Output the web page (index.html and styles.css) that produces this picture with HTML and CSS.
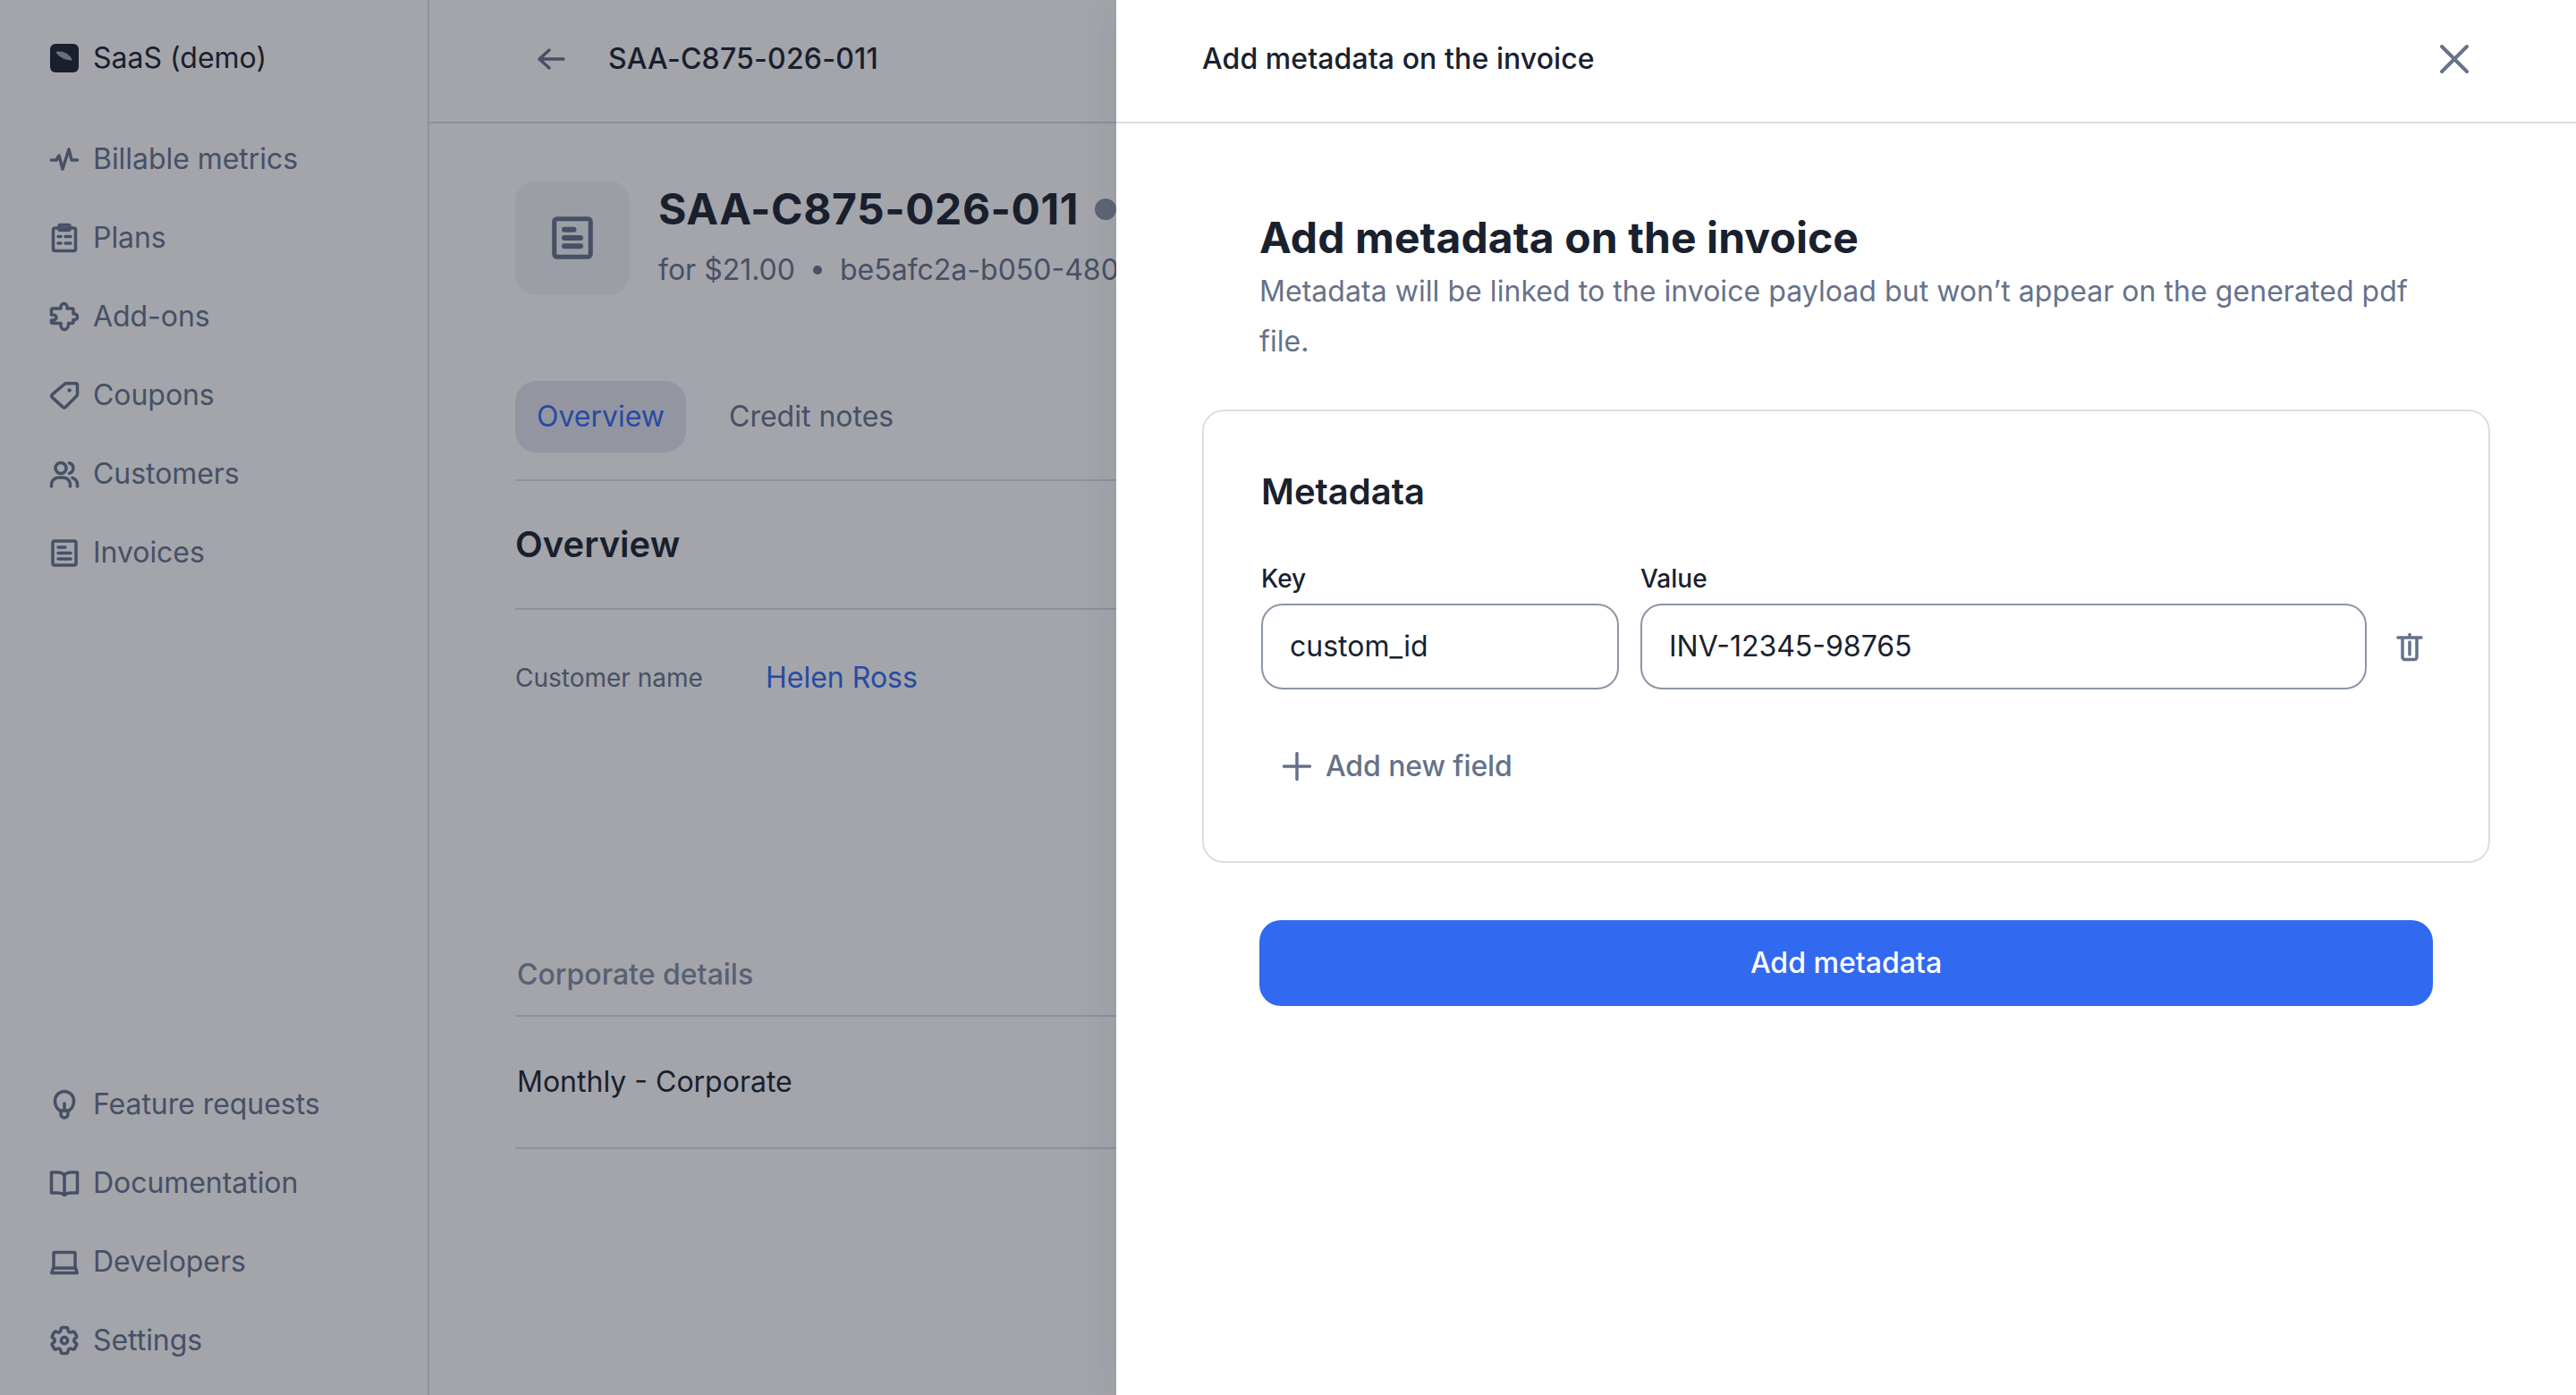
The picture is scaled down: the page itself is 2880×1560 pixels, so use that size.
FILE: index.html
```html
<!DOCTYPE html>
<html lang="en">
<head>
<meta charset="utf-8">
<title>Add metadata on the invoice</title>
<link rel="stylesheet" href="styles.css">
</head>
<body>
<div class="app">
	<!-- Sidebar -->
	<aside class="sidebar">
		<div class="org">
			<svg class="icon" viewBox="0 0 16 16"><rect width="16" height="16" rx="3" fill="#19212e"/><path d="M3.600 4.400c3.200-.6 6.600.6 8.600 4.200.3.6.3.8-.3.7-3.600-.4-6.600-1.700-8.500-4.300-.2-.3-.1-.5.2-.6z" fill="#a4a6ac"/></svg>
			<span>SaaS (demo)</span>
		</div>
		<nav class="nav">
			<a class="nav-item"><svg class="icon" viewBox="0 0 16 16"><path d="M.75 8.500H3.500L5 6l2 7.500L10.500 2.500 12 8.500h3.250"/></svg>Billable metrics</a>
			<a class="nav-item"><svg class="icon" viewBox="0 0 16 16"><rect x="1.750" y="2.500" width="12.500" height="12.750" rx="1"/><rect x="5" y=".75" width="6" height="3" rx=".75"/><path d="M4.500 7.250h1.500M8.500 7.250h3M4.500 11h1.500M8.500 11h3"/></svg>Plans</a>
			<a class="nav-item"><svg class="icon" viewBox="0 0 16 16"><path d="M6 3.500C5.700 1.500 6.800.75 7.700.75S9.800 1.500 9.500 3.500h2.750a.75.75 0 0 1 .75.75v2.250c1.800-.2 2.250.75 2.250 1.750S14.800 10 13 9.750V11a.75.75 0 0 1-.75.75h-2C10.500 13.500 9.500 15.250 8 15.250s-2.200-1.500-2-3.500H1.500a.75.75 0 0 1-.75-.75V10C2.500 10.200 3.500 9.500 3.500 8.500S2.500 6.800.75 7V4.250a.75.75 0 0 1 .75-.75z"/></svg>Add-ons</a>
			<a class="nav-item"><svg class="icon" viewBox="0 0 16 16"><path d="M1.200 7.600L8 1.800a1.500 1.500 0 0 1 1-.4h5.250a1 1 0 0 1 1 1V7.500a1.500 1.500 0 0 1-.5 1L8.500 14.700a1 1 0 0 1-1.300 0L1.200 9.200a1 1 0 0 1 0-1.600z"/><circle class="solid" cx="10.800" cy="5.200" r="1.100"/></svg>Coupons</a>
			<a class="nav-item"><svg class="icon" viewBox="0 0 16 16"><circle cx="6" cy="4.800" r="3"/><path d="M.75 15v-1a4 4 0 0 1 4-4h2.500a4 4 0 0 1 4 4V15M10.700 1.900a3 3 0 0 1 0 5.800M12.500 10.200a4 4 0 0 1 2.750 3.800V15"/></svg>Customers</a>
			<a class="nav-item"><svg class="icon" viewBox="0 0 16 16"><rect x="1.500" y="1.500" width="13" height="13.500" rx="1"/><path d="M4.500 5h4M4.500 8.250h7M4.500 11.500h7"/></svg>Invoices</a>
		</nav>
		<nav class="nav nav-bottom">
			<a class="nav-item"><svg class="icon" viewBox="0 0 16 16"><path d="M5.500 11.500C3.700 10.300 2.750 8.500 2.750 6a5.250 5.250 0 0 1 10.500 0c0 2.500-.95 4.300-2.750 5.500z"/><path d="M6 11.500v2a2 2 0 0 0 4 0v-2M8 7.500v4"/></svg>Feature requests</a>
			<a class="nav-item"><svg class="icon" viewBox="0 0 16 16"><path d="M8 3.500C7 2.500 5.800 2 4.500 2H.75v11.500h4c1.300 0 2.300.4 3.250 1.250.95-.85 1.950-1.250 3.250-1.250h4V2H11.500C10.200 2 9 2.500 8 3.500zM8 3.500v11.250"/></svg>Documentation</a>
			<a class="nav-item"><svg class="icon" viewBox="0 0 16 16"><rect x="2" y="2.750" width="12" height="8.750" rx=".5"/><path d="M1.750 11.500L.9 14.250h14.200L14.250 11.500"/></svg>Developers</a>
			<a class="nav-item"><svg class="icon icon-gear" viewBox="2 2 20 20"><path d="M9.594 3.940c.09-.542.56-.94 1.110-.94h2.593c.55 0 1.020.398 1.110.94l.213 1.281c.063.374.313.686.645.870.074.04.147.083.22.127.325.196.72.257 1.075.124l1.217-.456a1.125 1.125 0 0 1 1.370.49l1.296 2.247a1.125 1.125 0 0 1-.26 1.431l-1.003.827c-.293.241-.438.613-.43.992a7.723 7.723 0 0 1 0 .255c-.008.378.137.75.43.991l1.004.827c.424.35.534.955.26 1.430l-1.298 2.247a1.125 1.125 0 0 1-1.369.491l-1.217-.456c-.355-.133-.75-.072-1.076.124a6.470 6.470 0 0 1-.22.128c-.331.183-.581.495-.644.869l-.213 1.281c-.09.543-.56.94-1.110.94h-2.594c-.55 0-1.019-.398-1.110-.94l-.213-1.281c-.062-.374-.312-.686-.644-.870a6.520 6.520 0 0 1-.22-.127c-.325-.196-.72-.257-1.076-.124l-1.217.456a1.125 1.125 0 0 1-1.369-.49l-1.297-2.247a1.125 1.125 0 0 1 .26-1.431l1.004-.827c.292-.24.437-.613.43-.991a6.932 6.932 0 0 1 0-.255c.007-.38-.138-.751-.43-.992l-1.004-.827a1.125 1.125 0 0 1-.26-1.430l1.297-2.247a1.125 1.125 0 0 1 1.370-.491l1.216.456c.356.133.751.072 1.076-.124.072-.044.146-.086.22-.128.332-.183.582-.495.644-.869l.214-1.280z"/><circle cx="12" cy="12" r="2.300"/></svg>Settings</a>
		</nav>
	</aside>

	<!-- Invoice page behind the drawer -->
	<main class="page">
		<header class="page-header">
			<svg class="icon" viewBox="0 0 16 16"><path d="M15 8H1.500M7 3L1.500 8 7 13"/></svg>
			<span>SAA-C875-026-011</span>
		</header>
		<div class="page-body">
			<section class="invoice-head">
				<div class="avatar"><svg class="icon-lg" viewBox="0 0 16 16"><rect x="1.250" y=".9" width="13.500" height="14.200" rx="1"/><path class="icon-lg-bars" d="M5 4.900h3.500M5 8h6M5 11.100h6"/></svg></div>
				<div>
					<div class="invoice-title"><h1>SAA-C875-026-011</h1><span class="status-dot"></span></div>
					<div class="invoice-sub"><span>for $21.00</span><span class="bullet"></span><span>be5afc2a-b050-480c-9c1e-7a62d1f0</span></div>
				</div>
			</section>
			<div class="tabs">
				<a class="tab tab-active">Overview</a>
				<a class="tab">Credit notes</a>
			</div>
			<h2 class="section-title">Overview</h2>
			<div class="info-row">
				<span class="info-label">Customer name</span>
				<a class="info-link">Helen Ross</a>
			</div>
			<div class="group-title">Corporate details</div>
			<div class="group-row">Monthly - Corporate</div>
		</div>
	</main>
</div>

<div class="overlay"></div>

<!-- Drawer -->
<aside class="drawer">
	<header class="drawer-header">
		<span>Add metadata on the invoice</span>
		<button class="close" aria-label="Close"><svg class="icon-close" viewBox="0 0 16 16"><path d="M1 1l14 14M15 1L1 15"/></svg></button>
	</header>
	<div class="drawer-body">
		<h2 class="drawer-title">Add metadata on the invoice</h2>
		<p class="drawer-desc">Metadata will be linked to the invoice payload but won’t appear on the generated pdf file.</p>
		<section class="card">
			<h3 class="card-title">Metadata</h3>
			<div class="fields">
				<div class="field field-key">
					<div class="field-label">Key</div>
					<div class="field-input">custom_id</div>
				</div>
				<div class="field field-value">
					<div class="field-label">Value</div>
					<div class="field-input">INV-12345-98765</div>
				</div>
				<button class="trash" aria-label="Delete"><svg class="icon" viewBox="0 0 16 16"><path d="M1.500 3h13M8 3V1.250"/><path d="M4 3.500V14a1.200 1.200 0 0 0 1.200 1.200h5.600A1.200 1.200 0 0 0 12 14V3.500M8 5.500v7"/></svg></button>
			</div>
			<div class="add-field"><svg class="icon" viewBox="0 0 16 16"><path d="M8 .75v14.500M.75 8h14.500"/></svg>Add new field</div>
		</section>
		<button class="submit">Add metadata</button>
	</div>
</aside>
</body>
</html>
```
FILE: styles.css
```css
* { box-sizing: border-box; }
html, body { margin: 0; height: 100%; }
body { width: 2880px; height: 1560px; overflow: hidden; background: #fff; color: #19212e; font-family: "Inter", "Liberation Sans", sans-serif; font-size: 32px; line-height: 40px; position: relative; }
h1, h2, h3, p { margin: 0; }
button { font: inherit; border: 0; background: none; padding: 0; }

.icon { width: 32px; height: 32px; flex: none; fill: none; stroke: #66728a; stroke-width: 1.750; stroke-linecap: round; stroke-linejoin: round; overflow: visible; }
.icon .solid { fill: #66728a; stroke: none; }
.org .icon { stroke: none; }
.icon-gear { stroke-width: 2.200; }

.app { display: flex; height: 1560px; }

/* sidebar */
.sidebar { width: 480px; flex: none; border-right: 2px solid #d9dee7; padding: 0 56px; display: flex; flex-direction: column; height: 100%; }
.org { display: flex; align-items: center; gap: 16px; height: 130px; }
.nav { display: flex; flex-direction: column; gap: 48px; padding-top: 28px; color: #66728a; letter-spacing: -.05px; }
.nav-item { display: flex; align-items: center; gap: 16px; height: 40px; }
.nav-bottom { margin-top: auto; padding: 0 0 41px; }

/* page behind */
.page { flex: 1; min-width: 0; overflow: hidden; }
.page-header { height: 138px; border-bottom: 2px solid #d9dee7; display: flex; align-items: center; gap: 48px; padding: 0 0 4px 120px; font-weight: 500; letter-spacing: .2px; }
.page-body { padding: 64px 96px 0; white-space: nowrap; }
.invoice-head { display: flex; gap: 32px; }
.avatar { width: 128px; height: 128px; background: #f3f4f6; border-radius: 24px; display: flex; align-items: center; justify-content: center; flex: none; }
.icon-lg { width: 48px; height: 48px; fill: none; stroke: #66728a; stroke-width: 1.700; stroke-linecap: round; stroke-linejoin: round; }
.icon-lg-bars { stroke-width: 2; }
.invoice-title { display: flex; align-items: center; gap: 18px; height: 64px; }
.invoice-title h1 { font-size: 48px; line-height: 64px; font-weight: 700; letter-spacing: .55px; }
.status-dot { width: 24px; height: 24px; border-radius: 50%; background: #8c95a6; flex: none; }
.invoice-sub { display: flex; align-items: center; gap: 20px; margin-top: 16px; color: #66728a; }
.bullet { width: 10px; height: 10px; border-radius: 50%; background: #66728a; }

.tabs { display: flex; gap: 24px; margin-top: 96px; padding-bottom: 30px; border-bottom: 2px solid #d9dee7; }
.tab { height: 80px; padding: 0 24px; border-radius: 24px; display: flex; align-items: center; color: #66728a; }
.tab-active { background: #e4e7ef; color: #3169f0; }
.section-title { font-size: 40px; line-height: 48px; font-weight: 600; height: 144px; padding: 47px 0; border-bottom: 2px solid #d9dee7; }
.info-row { display: flex; align-items: center; margin-top: 56px; height: 40px; }
.info-label { width: 280px; font-size: 28px; color: #66728a; }
.info-link { color: #3169f0; }
.group-title { margin-top: 288px; padding: 0 0 23px 2px; height: 71px; line-height: 48px; font-weight: 500; color: #838c9e; border-bottom: 2px solid #d9dee7; }
.group-row { height: 148px; display: flex; align-items: center; padding-left: 2px; border-bottom: 2px solid #d9dee7; }

/* overlay + drawer */
.overlay { position: absolute; inset: 0; background: rgba(25, 30, 44, .4); }
.drawer { position: absolute; top: 0; right: 0; bottom: 0; width: 1632px; background: #fff; box-shadow: 0 0 48px rgba(25, 33, 46, .08); }
.drawer-header { height: 138px; border-bottom: 2px solid #d9dee7; padding: 0 96px 4px; display: flex; align-items: center; justify-content: space-between; font-weight: 500; letter-spacing: .08px; }
.close { width: 80px; height: 80px; display: flex; align-items: center; justify-content: center; }
.icon-close { width: 32px; height: 32px; fill: none; stroke: #66728a; stroke-width: 2; stroke-linecap: round; overflow: visible; }
.drawer-body { padding: 96px 96px 0; }
.drawer-title { font-size: 48px; line-height: 64px; font-weight: 700; margin-left: 64px; letter-spacing: .1px; }
.drawer-desc { color: #66728a; line-height: 56px; margin: 0 64px; letter-spacing: .05px; }
.card { margin-top: 48px; width: 1440px; height: 507px; border: 2px solid #d9dee7; border-radius: 24px; padding: 64px; }
.card-title { font-size: 40px; line-height: 48px; font-weight: 600; margin-top: 2px; }
.fields { display: flex; gap: 24px; align-items: flex-end; margin-top: 57px; }
.field-key { width: 400px; flex: none; }
.field-value { flex: 1; }
.field-label { font-size: 28px; line-height: 32px; font-weight: 500; margin-bottom: 12px; }
.field-input { height: 96px; border: 2px solid #8c95a6; border-radius: 24px; padding: 0 30px; display: flex; align-items: center; }
.trash { width: 48px; height: 96px; flex: none; display: flex; align-items: center; justify-content: center; }
.add-field { display: flex; align-items: center; gap: 16px; margin-top: 66px; padding-left: 24px; height: 40px; color: #66728a; font-weight: 500; letter-spacing: -.1px; }
.submit { display: block; width: 1312px; height: 96px; margin: 64px 0 0 64px; background: #3169f0; color: #fff; border-radius: 24px; font-weight: 500; }
```
